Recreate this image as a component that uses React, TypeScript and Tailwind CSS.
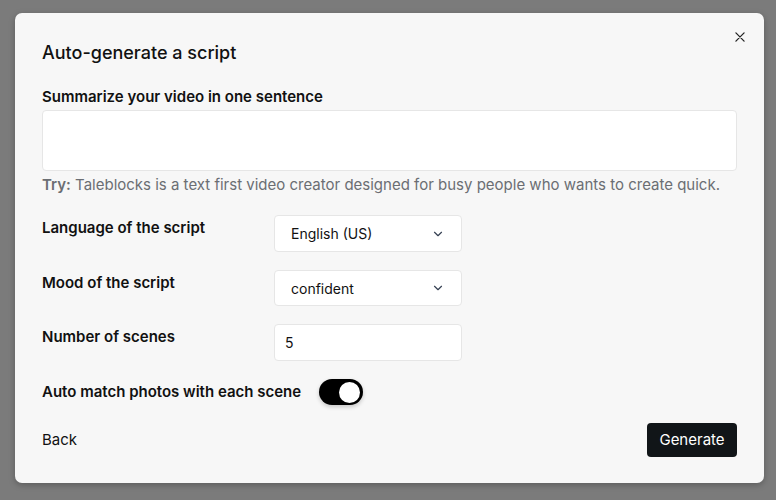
import React, { useState } from "react";

const font = { fontFamily: "Inter, 'Noto Sans', sans-serif" };

const Chevron = () => (
  <svg className="w-3.5 h-3.5 text-gray-700" fill="none" viewBox="0 0 24 24" stroke="currentColor">
    <path strokeLinecap="round" strokeLinejoin="round" strokeWidth={2} d="M6 9l6 6 6-6" />
  </svg>
);

const Row: React.FC<{ label: string; children: React.ReactNode }> = ({ label, children }) => (
  <div className="flex items-start">
    <div className="w-[232px] pt-[3px] text-[15px] leading-5 font-semibold text-[#111]">{label}</div>
    {children}
  </div>
);

const Select: React.FC<{ value: string; h: string }> = ({ value, h }) => (
  <div className={`w-[188px] ${h} bg-white border border-[#e6e6e6] rounded-[4px] flex items-center justify-between pl-4 pr-4 text-[14px] text-[#111]`}>
    <span>{value}</span>
    <Chevron />
  </div>
);

export default function App() {
  const [on, setOn] = useState(true);
  return (
    <div className="w-[776px] h-[500px] bg-[#7b7b7b] pt-[13px] pl-[15px]" style={font}>
      <div className="relative w-[749px] bg-[#f7f7f7] rounded-[7px] shadow-[0_2px_6px_rgba(0,0,0,0.25)] px-[27px] pt-[26px] pb-[26px] flex flex-col">
        <button type="button" className="absolute right-[17px] top-[17px] text-[#222]">
          <svg className="w-[14px] h-[14px]" fill="none" viewBox="0 0 24 24" stroke="currentColor">
            <path strokeLinecap="round" strokeWidth={2.2} d="M5 5l14 14M19 5L5 19" />
          </svg>
        </button>
        <h2 className="text-[18px] leading-7 font-medium text-[#111]">Auto-generate a script</h2>
        <div className="mt-5 text-[15px] leading-5 font-semibold text-[#111]">Summarize your video in one sentence</div>
        <div className="mt-[3px] h-[61px] shrink-0 bg-white border border-[#e6e6e6] rounded-[4px]" />
        <p className="mt-1 text-[15px] leading-5 text-[#6b6e73]">
          <span className="font-semibold">Try:</span> Taleblocks is a text first video creator designed for busy people who wants to create quick.
        </p>
        <div className="mt-5 flex flex-col gap-[18px]">
          <Row label="Language of the script">
            <Select value="English (US)" h="h-[37px]" />
          </Row>
          <Row label="Mood of the script">
            <Select value="confident" h="h-[36px]" />
          </Row>
          <Row label="Number of scenes">
            <div className="w-[188px] h-[37px] bg-white border border-[#e6e6e6] rounded-[4px] flex items-center pl-[10px] text-[14px] text-[#111]">5</div>
          </Row>
          <div className="flex items-center h-[26px]">
            <span className="text-[15px] leading-5 font-semibold text-[#111]">Auto match photos with each scene</span>
            <button
              type="button"
              onClick={() => setOn(!on)}
              className={`ml-[18px] w-[44px] h-[26px] rounded-full p-[3px] flex items-center shadow-[0_2px_4px_rgba(0,0,0,0.2)] ${on ? "bg-black justify-end" : "bg-gray-300 justify-start"}`}
            >
              <span className="w-[21px] h-[21px] rounded-full bg-white" />
            </button>
          </div>
        </div>
        <div className="mt-[18px] flex items-center justify-between">
          <button type="button" className="text-[15px] text-[#111]">Back</button>
          <button type="button" className="w-[90px] h-[34px] bg-[#111518] text-white text-[15px] rounded-[4px]">Generate</button>
        </div>
      </div>
    </div>
  );
}
